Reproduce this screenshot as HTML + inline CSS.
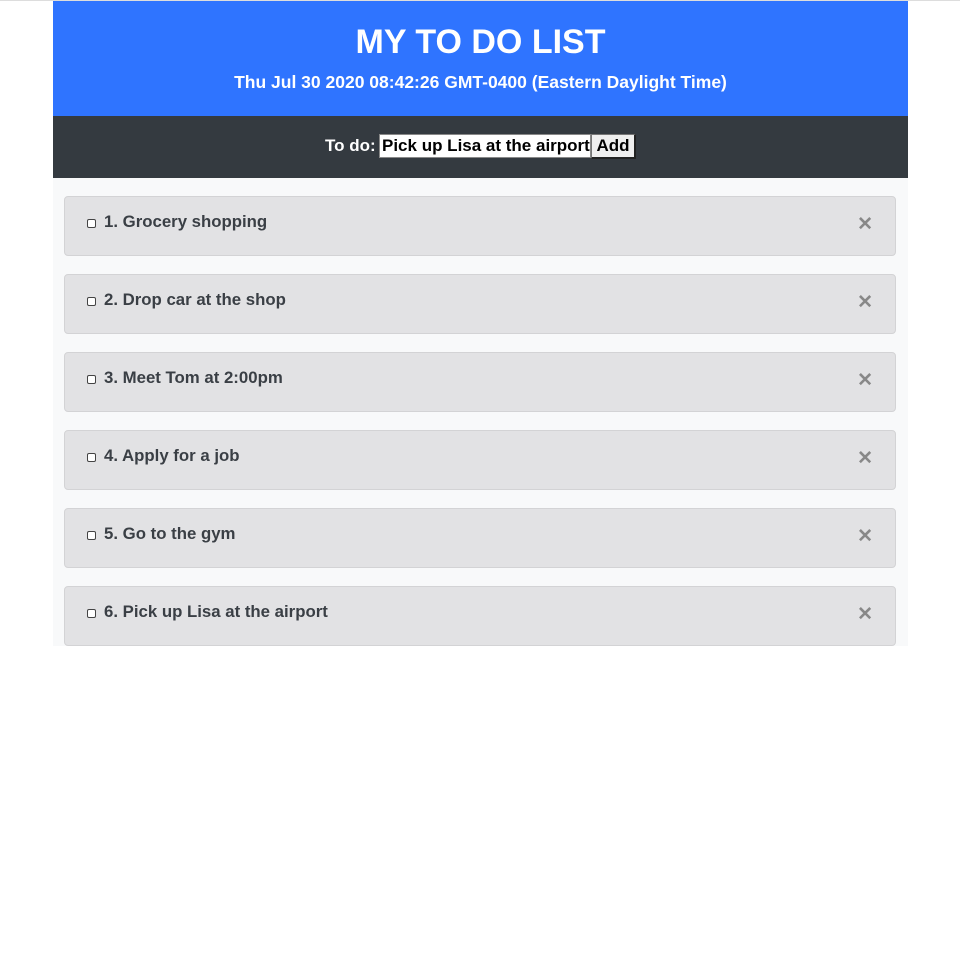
<!DOCTYPE html>
<html><head><style>
body{margin:0;background:#fff;font-family:"Liberation Sans",Arial,sans-serif;font-weight:bold}
.top{height:1px;background:#ddd}
.wrap{position:absolute;left:53px;top:1px;width:855px}
.hd{background:#2f74ff;height:115px;color:#fff;text-align:center}
.hd h1{margin:0;padding-top:21px;font-size:34px;line-height:40px}
.hd p{margin:10px 0 0;font-size:17.5px}
.bar{background:#343a40;height:62px;color:#fff;position:relative;font-size:17px}
.bar .lbl{position:absolute;left:272px;top:20px}
.bar .in{position:absolute;left:326px;top:18px;width:208px;height:22px;background:#fff;border:1px solid #888;color:#000;font-size:17px;line-height:22px;padding-left:2px;overflow:hidden;white-space:nowrap}
.bar .btn{position:absolute;left:538px;top:18px;width:42px;height:22px;background:#efefef;border:1px solid #767676;border-right:2px solid #222;border-bottom:2px solid #222;color:#000;line-height:22px;text-align:center;box-sizing:content-box}
.list{background:#f8f9fa;height:468px;position:relative}
.it{position:absolute;left:11px;width:830px;height:58px;background:#e2e2e4;border:1px solid #d3d3d5;border-radius:4px}
.cb{position:absolute;left:22px;top:22px;width:7px;height:7px;border:1px solid #444;border-radius:2px;background:#fff}
.tx{position:absolute;left:39px;top:15px;font-size:16.8px;color:#3a3f45}
.x{position:absolute;right:22px;top:16px;font-size:19px;color:#888}
</style></head><body>
<div class="top"></div>
<div class="wrap">
<div class="hd"><h1>MY TO DO LIST</h1><p>Thu Jul 30 2020 08:42:26 GMT-0400 (Eastern Daylight Time)</p></div>
<div class="bar"><span class="lbl">To do:</span><div class="in">Pick up Lisa at the airport</div><div class="btn">Add</div></div>
<div class="list">
<div class="it" style="top:18px"><div class="cb"></div><div class="tx">1. Grocery shopping</div><div class="x">✕</div></div>
<div class="it" style="top:96px"><div class="cb"></div><div class="tx">2. Drop car at the shop</div><div class="x">✕</div></div>
<div class="it" style="top:174px"><div class="cb"></div><div class="tx">3. Meet Tom at 2:00pm</div><div class="x">✕</div></div>
<div class="it" style="top:252px"><div class="cb"></div><div class="tx">4. Apply for a job</div><div class="x">✕</div></div>
<div class="it" style="top:330px"><div class="cb"></div><div class="tx">5. Go to the gym</div><div class="x">✕</div></div>
<div class="it" style="top:408px"><div class="cb"></div><div class="tx">6. Pick up Lisa at the airport</div><div class="x">✕</div></div>
</div>
</div>
</body></html>
